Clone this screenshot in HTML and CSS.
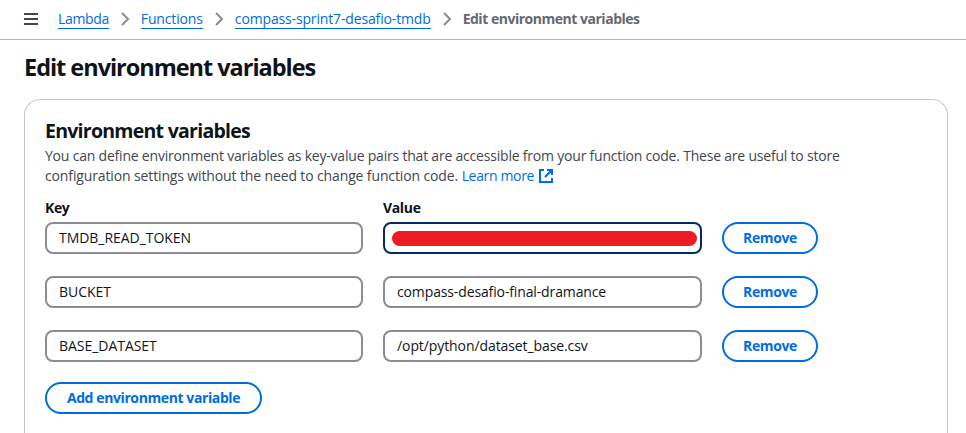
FILE: index.html
```
<!DOCTYPE html>
<html lang="en">
<head>
<meta charset="utf-8">
<title>Edit environment variables</title>
<link rel="stylesheet" href="styles.css">
</head>
<body>
<header class="topbar">
  <svg class="menu" width="14" height="12" viewBox="0 0 14 12"><path d="M0 1h14M0 6h14M0 11h14"/></svg>
  <nav class="crumbs">
    <a class="c1" href="#">Lambda</a>
    <svg class="chev" width="8" height="14" viewBox="0 0 8 14"><path d="M1 1l6 6-6 6"/></svg>
    <a class="c2" href="#">Functions</a>
    <svg class="chev" width="8" height="14" viewBox="0 0 8 14"><path d="M1 1l6 6-6 6"/></svg>
    <a class="c3" href="#">compass-sprint7-desafio-tmdb</a>
    <svg class="chev" width="8" height="14" viewBox="0 0 8 14"><path d="M1 1l6 6-6 6"/></svg>
    <span class="current">Edit environment variables</span>
  </nav>
</header>
<main>
  <h1>Edit environment variables</h1>
  <section class="card">
    <h2>Environment variables</h2>
    <p class="desc"><span class="d1">You can define environment variables as key-value pairs that are accessible from your function code. These are useful to store</span><br><span class="d2">configuration settings without the need to change function code.</span> <a class="learn" href="#">Learn more</a><svg class="ext" width="14" height="14" viewBox="0 0 14 14"><path d="M5 1H1v12h12V9M8 1h5v5M13 1L6 8"/></svg></p>
    <div class="grid labels"><span>Key</span><span>Value</span></div>
    <div class="grid row">
      <div class="input">TMDB_READ_TOKEN</div><div class="input focused"><div class="redacted"></div></div><button class="btn">Remove</button>
    </div>
    <div class="grid row">
      <div class="input">BUCKET</div><div class="input value">compass-desafio-final-dramance</div><button class="btn">Remove</button>
    </div>
    <div class="grid row">
      <div class="input">BASE_DATASET</div><div class="input path">/opt/python/dataset_base.csv</div><button class="btn">Remove</button>
    </div>
    <button class="btn add">Add environment variable</button>
  </section>
</main>
</body>
</html>
```
FILE: styles.css
```
* { box-sizing: border-box; }
body { margin: 0; height: 433px; display: flex; flex-direction: column; background: #fff; color: #0f141a; font: 14px/20px "Open Sans", sans-serif; }
svg { fill: none; flex: none; }
a { color: #006ce0; text-decoration: none; }
.topbar { height: 40px; flex: none; border-bottom: 1px solid #b4b4bb; display: flex; align-items: center; padding: 0 24px 1px; }
.menu { stroke: #424650; stroke-width: 2; margin-right: 20px; }
.crumbs { display: flex; align-items: center; white-space: nowrap; }
.crumbs a { border-bottom: 1px solid #006ce0; line-height: 18px; }
.c1 { letter-spacing: -.35px; }
.c2 { letter-spacing: -.15px; }
.c3 { letter-spacing: -.15px; }
.chev { stroke: #8c8c94; stroke-width: 2; margin: 0 12px; }
.current { color: #656871; font-weight: 700; letter-spacing: -.48px; }
main { flex: 1; min-height: 0; display: flex; flex-direction: column; padding: 12px 18px 0 24px; }
h1 { margin: 0; font-size: 23.5px; font-weight: 700; line-height: 31px; letter-spacing: -1.03px; }
.card { flex: 1; min-height: 0; margin-top: 16px; border: 1px solid #c6c6cd; border-bottom: 0; border-radius: 16px 16px 0 0; padding: 19px 20px 0; }
h2 { margin: 0; font-size: 19.5px; font-weight: 700; line-height: 24px; letter-spacing: -.74px; }
.desc { margin: 3px 0 12px; color: #424650; white-space: nowrap; }
.d1 { letter-spacing: -.205px; }
.d2 { letter-spacing: -.13px; }
.learn { letter-spacing: -.35px; }
.ext { stroke: #006ce0; stroke-width: 2; margin-left: 5px; vertical-align: -2px; }
.grid { display: grid; grid-template-columns: 318px 319px 96px; column-gap: 20px; }
.labels { font-weight: 700; letter-spacing: -.35px; margin-bottom: 4px; }
.row { margin-bottom: 22px; }
.input { height: 32px; border: 2px solid #8c8c94; border-radius: 8px; padding: 4px 12px; white-space: nowrap; letter-spacing: -.04px; }
.value { letter-spacing: -.13px; }
.path { letter-spacing: -.09px; }
.focused { border-color: #002b66; padding: 7px 3px 5px 7px; }
.redacted { height: 15px; border-radius: 8px; background: #ed1c24; }
.btn { height: 32px; border: 2px solid #006ce0; border-radius: 20px; background: #fff; color: #006ce0; font: 700 14px/20px "Open Sans", sans-serif; letter-spacing: -.4px; padding: 4px 0; white-space: nowrap; }
.add { width: 217px; display: block; margin-top: -2px; }
```
